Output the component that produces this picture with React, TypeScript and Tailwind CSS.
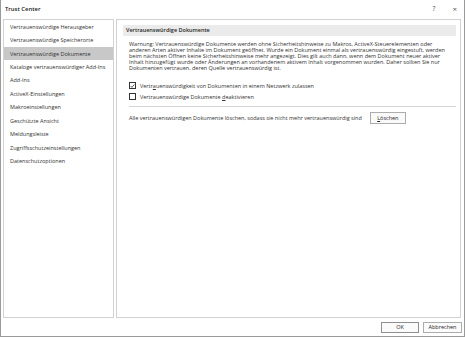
import React from "react";

const items = [
  "Vertrauenswürdige Herausgeber",
  "Vertrauenswürdige Speicherorte",
  "Vertrauenswürdige Dokumente",
  "Kataloge vertrauenswürdiger Add-Ins",
  "Add-Ins",
  "ActiveX-Einstellungen",
  "Makroeinstellungen",
  "Geschützte Ansicht",
  "Meldungsleiste",
  "Zugriffsschutzeinstellungen",
  "Datenschutzoptionen",
];

const lines = [
  "Warnung: Vertrauenswürdige Dokumente werden ohne Sicherheitshinweise zu Makros, ActiveX-Steuerelementen oder",
  "anderen Arten aktiver Inhalte im Dokument geöffnet. Wurde ein Dokument einmal als vertrauenswürdig eingestuft, werden",
  "beim nächsten Öffnen keine Sicherheitshinweise mehr angezeigt. Dies gilt auch dann, wenn dem Dokument neuer aktiver",
  "Inhalt hinzugefügt wurde oder Änderungen an vorhandenem aktivem Inhalt vorgenommen wurden. Daher sollten Sie nur",
  "Dokumenten vertrauen, deren Quelle vertrauenswürdig ist.",
];

export default function App() {
  return (
    <div
      className="w-[465px] h-[337px] bg-white text-[#262626] flex flex-col border-l border-r border-b border-[#9a9a9a] text-[5.5px] leading-[6.1px] overflow-hidden"
      style={{ fontFamily: '"Open Sans", "Noto Sans", sans-serif' }}
    >
      <div className="h-[19px] flex items-center pl-[4px] pr-[7px] pb-[1px]">
        <span className="text-[5.9px] font-semibold text-[#1a1a1a]">Trust Center</span>
        <span className="ml-auto text-[6.5px] text-[#444]">?</span>
        <span className="ml-[17px] text-[8px] text-[#555] leading-none">×</span>
      </div>
      <div className="flex h-[299px] pl-[2px] pr-[3px] gap-[2px]">
        <div className="w-[111px] border border-[#d2d2d2] flex flex-col">
          {items.map((t, i) => (
            <div
              key={t}
              className={
                "h-[13.45px] flex items-center pl-[6px] whitespace-nowrap text-[#333] " +
                (i === 2 ? "bg-[#c8c8c8] text-[#1a1a1a]" : "")
              }
            >
              {t}
            </div>
          ))}
        </div>
        <div className="flex-1 border border-[#d2d2d2] flex flex-col pt-[5px] pl-[6px] pr-[4px]">
          <div className="h-[11px] bg-[#ebebeb] flex items-center pl-[3px] font-semibold text-[#262626]">
            Vertrauenswürdige Dokumente
          </div>
          <div className="pl-[6px] pt-[5px] flex flex-col text-[#333]">
            {lines.map((l) => (
              <div key={l} className="whitespace-nowrap h-[6.1px] leading-[6.1px]">
                {l}
              </div>
            ))}
            <div className="flex items-center gap-[4px] mt-[9px] h-[11px]">
              <div className="w-[7px] h-[7px] border border-[#333] flex items-center justify-center">
                <svg width="6" height="6" viewBox="0 0 6 6">
                  <path d="M0.8 3.1 L2.3 4.6 L5.2 1.2" stroke="#222" strokeWidth="0.9" fill="none" />
                </svg>
              </div>
              <span className="whitespace-nowrap">
                Vertr<span className="underline">a</span>uenswürdigkeit von Dokumenten in einem Netzwerk zulassen
              </span>
            </div>
            <div className="flex items-center gap-[4px] h-[11px]">
              <div className="w-[7px] h-[7px] border border-[#333]" />
              <span className="whitespace-nowrap">
                Vertrauenswürdige Dokumente <span className="underline">d</span>eaktivieren
              </span>
            </div>
          </div>
          <div className="ml-[6px] mt-[4px] border-t border-[#d4d4d4]" />
          <div className="ml-[6px] mt-[5px] flex items-center">
            <span className="whitespace-nowrap text-[#333]">
              Alle vertrauenswürdigen Dokumente löschen, sodass sie nicht mehr vertrauenswürdig sind
            </span>
            <div className="ml-[8px] w-[36px] h-[12px] border border-[#adadad] bg-[#fafafa] flex items-center justify-center">
              <span>
                <span className="underline">L</span>öschen
              </span>
            </div>
          </div>
        </div>
      </div>
      <div className="flex justify-end gap-[4px] pr-[2px] pt-[4px]">
        <div className="w-[38px] h-[11px] border border-[#8f8f8f] bg-[#fbfbfb] flex items-center justify-center">
          OK
        </div>
        <div className="w-[39px] h-[11px] border border-[#adadad] bg-[#fbfbfb] flex items-center justify-center">
          Abbrechen
        </div>
      </div>
    </div>
  );
}
